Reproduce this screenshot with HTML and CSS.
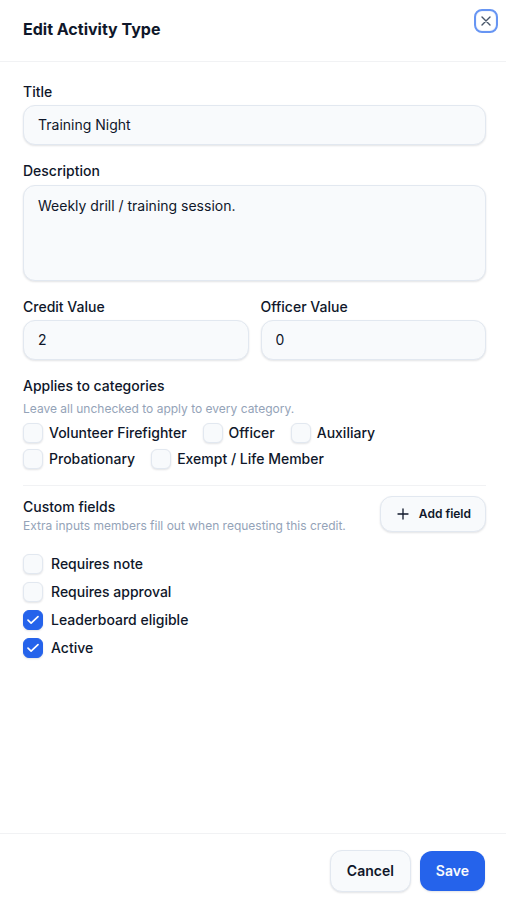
FILE: index.html
```html
<!DOCTYPE html>
<html lang="en">
<head>
<meta charset="utf-8">
<meta name="viewport" content="width=device-width, initial-scale=1">
<title>Edit Activity Type</title>
<link rel="stylesheet" href="styles.css">
</head>
<body>
<form class="sheet">
  <header class="sheet-header">
    <h1 class="sheet-title">Edit Activity Type</h1>
    <button class="close" type="button" aria-label="Close">
      <svg width="16" height="16" viewBox="0 0 16 16" fill="none" stroke="currentColor" stroke-width="1.4" stroke-linecap="round"><path d="M4 4l8 8M12 4l-8 8"/></svg>
    </button>
  </header>

  <main class="sheet-body">
    <div class="field">
      <label class="label" for="title">Title</label>
      <input class="input" id="title" type="text" value="Training Night">
    </div>
    <div class="field field-tall">
      <label class="label" for="description">Description</label>
      <textarea class="input textarea" id="description">Weekly drill / training session.</textarea>
    </div>
    <div class="field-row">
      <div class="field">
        <label class="label" for="credit">Credit Value</label>
        <input class="input" id="credit" type="text" inputmode="numeric" value="2">
      </div>
      <div class="field">
        <label class="label" for="officer">Officer Value</label>
        <input class="input" id="officer" type="text" inputmode="numeric" value="0">
      </div>
    </div>

    <fieldset class="categories">
      <legend class="label">Applies to categories</legend>
      <p class="hint">Leave all unchecked to apply to every category.</p>
      <div class="category-list">
        <label class="check"><input class="box" type="checkbox">Volunteer Firefighter</label>
        <label class="check"><input class="box" type="checkbox">Officer</label>
        <label class="check"><input class="box" type="checkbox">Auxiliary</label>
        <label class="check"><input class="box" type="checkbox">Probationary</label>
        <label class="check"><input class="box" type="checkbox">Exempt / Life Member</label>
      </div>
    </fieldset>

    <section class="custom">
      <div class="custom-text">
        <h2 class="label">Custom fields</h2>
        <p class="hint">Extra inputs members fill out when requesting this credit.</p>
      </div>
      <button class="button button-small" type="button">
        <svg width="16" height="16" viewBox="0 0 16 16" fill="none" stroke="currentColor" stroke-width="1.3" stroke-linecap="round"><path d="M8 3v10M3 8h10"/></svg>
        Add field
      </button>
    </section>

    <div class="options">
      <label class="check check-wide"><input class="box" type="checkbox">Requires note</label>
      <label class="check check-wide"><input class="box" type="checkbox">Requires approval</label>
      <label class="check check-wide"><input class="box" type="checkbox" checked><svg class="tick" width="20" height="20" viewBox="0 0 20 20"><path d="M5 10.2l3.1 2.9L15 6.7"/></svg>Leaderboard eligible</label>
      <label class="check check-wide"><input class="box" type="checkbox" checked><svg class="tick" width="20" height="20" viewBox="0 0 20 20"><path d="M5 10.2l3.1 2.9L15 6.7"/></svg>Active</label>
    </div>
  </main>

  <footer class="sheet-footer">
    <button class="button" type="button">Cancel</button>
    <button class="button button-primary" type="submit">Save</button>
  </footer>
</form>
</body>
</html>
```

FILE: styles.css
```css
* {
  box-sizing: border-box;
}

body {
  margin: 0;
  background: #fff;
  color: #0f172a;
  font-family: Inter, "Liberation Sans", sans-serif;
  font-size: 14px;
  line-height: 20px;
}

h1, h2, p, fieldset, legend {
  margin: 0;
  padding: 0;
  border: 0;
}

.sheet {
  display: flex;
  flex-direction: column;
  min-height: 100vh;
}

.sheet-header {
  display: flex;
  align-items: flex-start;
  justify-content: space-between;
  padding: 9px 8px 20px 23px;
  border-bottom: 1px solid #f1f2f4;
}

.sheet-title {
  padding-top: 8px;
  font-size: 16px;
  font-weight: 700;
  line-height: 24px;
}

.close {
  display: flex;
  align-items: center;
  justify-content: center;
  width: 24px;
  height: 24px;
  padding: 0;
  border: 2px solid #6795f3;
  border-radius: 8px;
  background: #fff;
  box-shadow: inset 0 0 0 1px #f4f7fc;
  color: #475569;
}

.sheet-body {
  display: flex;
  flex: 1;
  flex-direction: column;
  gap: 16px;
  padding: 20px 20px 20px 23px;
}

.field {
  display: flex;
  flex-direction: column;
  gap: 3px;
}

.field-tall {
  gap: 4px;
}

.field-row {
  display: grid;
  grid-template-columns: 1fr 1fr;
  gap: 12px;
}

.label {
  font-size: 14px;
  font-weight: 500;
  line-height: 20px;
}

.input {
  width: 100%;
  height: 40px;
  padding: 0 14px 2px;
  border: 1px solid #e2e8f0;
  border-radius: 12px;
  background: #f8fafc;
  box-shadow: 0 1px 2px rgba(15, 23, 42, 0.12);
  color: #0f172a;
  font: inherit;
}

.textarea {
  display: block;
  height: 96px;
  padding: 10px 14px;
  resize: none;
}

.hint {
  color: #94a3b8;
  font-size: 12px;
  line-height: 16px;
}

.categories {
  min-width: 0;
}

.categories .hint {
  padding: 5px 0 6px;
}

.category-list {
  display: flex;
  flex-wrap: wrap;
  gap: 6px 16px;
}

.check {
  display: grid;
  grid-template-columns: 20px auto;
  column-gap: 6px;
  font-weight: 500;
}

.check-wide {
  column-gap: 8px;
}

.box {
  grid-area: 1 / 1;
  width: 20px;
  height: 20px;
  margin: 0;
  border: 1px solid #e2e8f0;
  border-radius: 6px;
  background: #f8fafc;
  box-shadow: 0 1px 2px rgba(15, 23, 42, 0.12);
  appearance: none;
}

.box:checked {
  border-color: #2563eb;
  background: #2563eb;
}

.tick {
  grid-area: 1 / 1;
  z-index: 1;
  display: none;
  fill: none;
  stroke: #fff;
  stroke-width: 1.7;
  stroke-linecap: round;
  stroke-linejoin: round;
  pointer-events: none;
}

.box:checked + .tick {
  display: block;
}

.custom {
  display: flex;
  align-items: flex-start;
  justify-content: space-between;
  gap: 12px;
  padding-top: 10px;
  border-top: 1px solid #f1f2f4;
}

.custom-text {
  display: grid;
  gap: 1px;
  padding-top: 1px;
}

.options {
  display: flex;
  flex-direction: column;
  align-items: flex-start;
  gap: 8px;
  padding-top: 4px;
}

.sheet-footer {
  display: flex;
  align-items: center;
  justify-content: flex-end;
  gap: 9px;
  padding: 16px 21px 14px;
  border-top: 1px solid #f1f2f4;
}

.button {
  display: flex;
  align-items: center;
  gap: 8px;
  height: 42px;
  padding: 0 16px;
  border: 1px solid #e2e8f0;
  border-radius: 12px;
  background: #f8fafc;
  box-shadow: 0 1px 2px rgba(15, 23, 42, 0.12);
  color: #0f172a;
  font: inherit;
  font-weight: 600;
}

.button-small {
  height: 36px;
  padding: 0 14px;
  font-size: 12px;
}

.button-primary {
  height: 40px;
  border: 0;
  background: #2563eb;
  color: #f8fafc;
}
```
